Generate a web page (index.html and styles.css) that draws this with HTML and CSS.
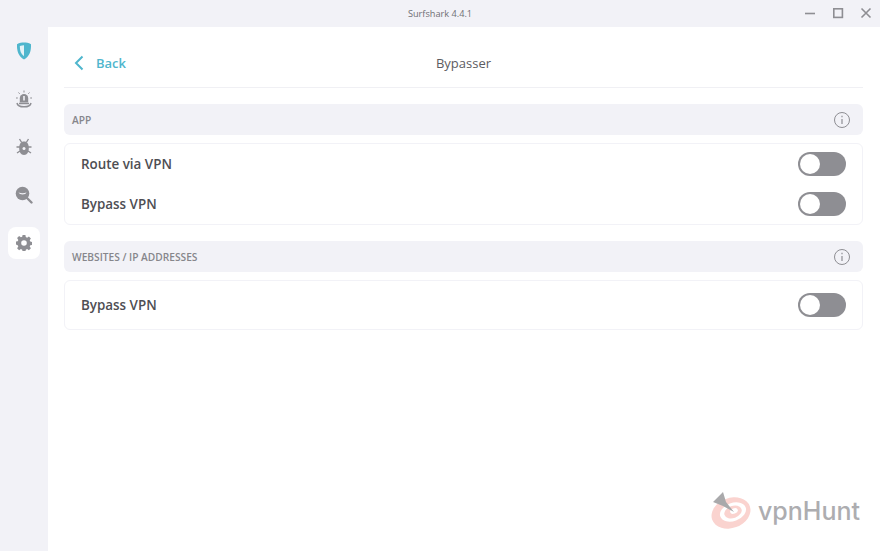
FILE: index.html
```html
<!DOCTYPE html>
<html lang="en">
<head>
    <meta charset="UTF-8">
    <title>Surfshark 4.4.1</title>
    <link rel="stylesheet" href="styles.css">
</head>
<body>
    <div class="window">
        <div class="titlebar">
            <div class="title">Surfshark 4.4.1</div>
            <div class="win-btns">
                <svg width="16" height="16" viewBox="0 0 16 16"><path d="M3 8.500h10" stroke="#8e8e93" stroke-width="1.600" fill="none"/></svg>
                <svg width="16" height="16" viewBox="0 0 16 16"><rect x="3.800" y="3.800" width="8.600" height="8.600" stroke="#8e8e93" stroke-width="1.600" fill="none"/></svg>
                <svg width="16" height="16" viewBox="0 0 16 16"><path d="M3.500 3.500l9 9M12.500 3.500l-9 9" stroke="#8e8e93" stroke-width="1.600" fill="none"/></svg>
            </div>
        </div>
        <div class="body-row">
            <div class="sidebar">
                <div class="side-item">
                    <svg width="16" height="18" viewBox="0 0 16 18"><path d="M1 2.200C3.500 1 5.700.6 8 .6s4.500.4 7 1.600c.3 6.800-1.400 12-7 15.200C2.400 14.200.7 9 1 2.200z" fill="#4fb6cd"/><path d="M8 3.200c-1.300 0-2.700.2-4.200.8C3.800 8.500 4.800 12 8 14.200z" fill="#e4f3f7"/></svg>
                </div>
                <div class="side-item">
                    <svg width="18" height="18" viewBox="0 0 18 18"><path d="M4.800 12.500V8.200a4.200 4.200 0 0 1 8.400 0v4.300z" fill="#8e8e93"/><path d="M8.200 6h1.600v4.500H8.200z" fill="#f2f2f7"/><path d="M2 13c.5 2.500 3.500 3.800 7 3.800s6.500-1.300 7-3.800" stroke="#8e8e93" stroke-width="1.500" fill="none"/><path d="M4 13.500h10" stroke="#8e8e93" stroke-width="1.500"/><path d="M9 .5v2M3.500 2.500l1.200 1.300M14.500 2.500l-1.200 1.300M1 8h1.800M15.200 8H17" stroke="#8e8e93" stroke-width="1" fill="none"/></svg>
                </div>
                <div class="side-item">
                    <svg width="18" height="18" viewBox="0 0 18 18"><path d="M9 3.500c3.200 0 4.800 2.500 4.800 6.500S12.200 17 9 17s-4.800-3-4.800-7S5.800 3.500 9 3.500z" fill="#8e8e93"/><path d="M4.500 1l2.200 3.500M13.500 1l-2.200 3.500M1.500 9h15M2 15l3-2M16 15l-3-2" stroke="#8e8e93" stroke-width="1.400" fill="none"/><circle cx="9" cy="10.500" r="1.500" fill="#f2f2f7"/></svg>
                </div>
                <div class="side-item">
                    <svg width="18" height="18" viewBox="0 0 18 18"><circle cx="7.500" cy="7.500" r="6.800" fill="#8e8e93"/><path d="M12 12l4.500 4.500" stroke="#8e8e93" stroke-width="2.400" stroke-linecap="round"/><path d="M3.500 6.500c2.500 1 5.500 1 8 0-.8 2.600-6.800 2.600-8 0z" fill="#f2f2f7"/></svg>
                </div>
                <div class="side-item selected">
                    <svg width="16" height="16" viewBox="0 0 16 16"><path fill="#8e8e93" fill-rule="evenodd" d="M6.600 0h2.800l.4 2.100 1.300.6 1.800-1.200 2 2-1.200 1.800.6 1.300 2.100.4v2.800l-2.100.4-.6 1.300 1.200 1.800-2 2-1.800-1.200-1.300.6-.4 2.100H6.600l-.4-2.100-1.300-.6-1.800 1.200-2-2 1.200-1.800-.6-1.300L-.4 9.400V6.600l2.100-.4.6-1.300-1.200-1.800 2-2 1.800 1.200 1.300-.6zM8 5.200a2.800 2.800 0 1 0 0 5.600 2.800 2.800 0 0 0 0-5.600z"/></svg>
                </div>
            </div>
            <div class="main">
                <div class="page-head">
                    <div class="back">
                        <svg width="12" height="16" viewBox="0 0 12 16"><path d="M9.500 1.500L3 8l6.500 6.500" stroke="#4fb6cd" stroke-width="2" fill="none"/></svg>
                        <span>Back</span>
                    </div>
                    <div class="page-title">Bypasser</div>
                </div>

                <div class="section-head">
                    <span>APP</span>
                    <svg class="info" width="18" height="18" viewBox="0 0 18 18"><circle cx="9" cy="9" r="7.500" stroke="#8e8e93" fill="none"/><path d="M9 8v5M9 4.800v1.400" stroke="#8e8e93" stroke-width="1.200"/></svg>
                </div>
                <div class="card">
                    <div class="row">
                        <span>Route via VPN</span>
                        <div class="toggle"><div class="knob"></div></div>
                    </div>
                    <div class="row">
                        <span>Bypass VPN</span>
                        <div class="toggle"><div class="knob"></div></div>
                    </div>
                </div>

                <div class="section-head">
                    <span>WEBSITES / IP ADDRESSES</span>
                    <svg class="info" width="18" height="18" viewBox="0 0 18 18"><circle cx="9" cy="9" r="7.500" stroke="#8e8e93" fill="none"/><path d="M9 8v5M9 4.800v1.400" stroke="#8e8e93" stroke-width="1.200"/></svg>
                </div>
                <div class="card single">
                    <div class="row">
                        <span>Bypass VPN</span>
                        <div class="toggle"><div class="knob"></div></div>
                    </div>
                </div>

                <div class="watermark">
                    <svg width="42" height="40" viewBox="0 0 42 40">
                        <ellipse cx="21" cy="22" rx="20" ry="15" fill="#fad3cf" transform="rotate(-20 21 22)"/>
                        <ellipse cx="23" cy="21" rx="13.500" ry="9" fill="#fff" transform="rotate(-20 23 21)"/>
                        <ellipse cx="23" cy="21" rx="9" ry="6" fill="#fad3cf" transform="rotate(-20 23 21)"/>
                        <ellipse cx="24" cy="20" rx="4" ry="2.600" fill="#fff" transform="rotate(-20 24 20)"/>
                        <path d="M13 1l3 10 8 10-11-6-10-4z" fill="#a9a9ab"/>
                    </svg>
                    <span>vpnHunt</span>
                </div>
            </div>
        </div>
    </div>
</body>
</html>
```

FILE: styles.css
```css
* {
    margin: 0;
    padding: 0;
    box-sizing: border-box;
    font-family: "Open Sans", "Noto Sans", sans-serif;
}
body {
    background: #f2f2f7;
    overflow: hidden;
}
.window {
    display: flex;
    flex-direction: column;
    height: 551px;
}
.titlebar {
    position: relative;
    height: 27px;
    display: flex;
    align-items: center;
    justify-content: center;
}
.title {
    font-size: 9.200px;
    color: #6f6f74;
}
.win-btns {
    position: absolute;
    right: 6px;
    top: 5px;
    display: flex;
    gap: 12px;
}
.body-row {
    flex: 1;
    display: flex;
}
.sidebar {
    width: 48px;
    display: flex;
    flex-direction: column;
    align-items: center;
    gap: 16px;
    padding-top: 8px;
}
.side-item {
    width: 32px;
    height: 32px;
    border-radius: 8px;
    display: flex;
    align-items: center;
    justify-content: center;
}
.selected {
    background: #fff;
}
.main {
    position: relative;
    flex: 1;
    background: #fff;
    padding: 0 17px 0 16px;
}
.page-head {
    position: relative;
    height: 61px;
    padding-top: 12px;
    border-bottom: 1px solid #f0f0f4;
    display: flex;
    align-items: center;
    justify-content: center;
    margin-bottom: 16px;
}
.back {
    position: absolute;
    left: 9px;
    top: 12px;
    bottom: 0;
    display: flex;
    align-items: center;
    gap: 11px;
    font-size: 13px;
    font-weight: 600;
    color: #4fb6cd;
}
.page-title {
    font-size: 13px;
    color: #5c5c61;
}
.section-head {
    height: 31px;
    background: #f2f2f7;
    border-radius: 6px;
    display: flex;
    align-items: center;
    justify-content: space-between;
    padding: 0 12px 0 8px;
    font-size: 10.200px;
    font-weight: 600;
    color: #86868b;
    margin-bottom: 8px;
}
.section-head span {
    margin-top: 1px;
}
.card {
    border: 1px solid #f2f2f7;
    border-radius: 6px;
    padding: 0 16px;
    margin-bottom: 16px;
    font-size: 13.400px;
    font-weight: 600;
    color: #4e4e53;
}
.row {
    height: 40px;
    display: flex;
    align-items: center;
    justify-content: space-between;
}
.card.single .row {
    height: 48px;
}
.toggle {
    width: 48px;
    height: 24px;
    border-radius: 12px;
    background: #8e8e93;
    padding: 2px;
}
.knob {
    width: 20px;
    height: 20px;
    border-radius: 50%;
    background: #fff;
}
.watermark {
    position: absolute;
    right: 20px;
    bottom: 20px;
    display: flex;
    align-items: center;
    gap: 6px;
    font-size: 25px;
    color: #adadb0;
}
.watermark span {
    font-family: "Inter", sans-serif;
    font-weight: 500;
    margin-top: -1px;
}
```
